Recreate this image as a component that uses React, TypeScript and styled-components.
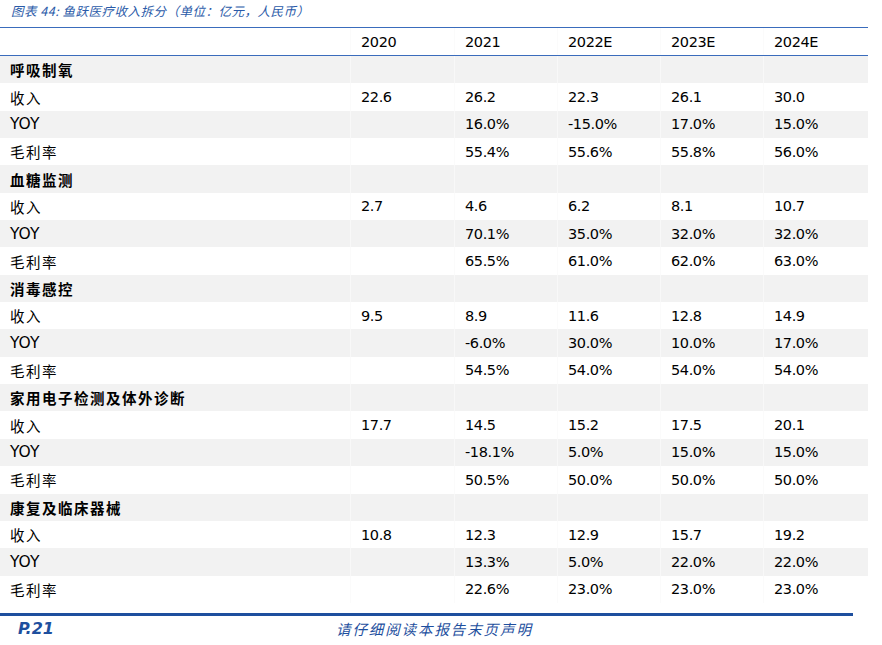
import React from 'react';
import styled, { createGlobalStyle } from 'styled-components';

const GlobalStyle = createGlobalStyle`
  html, body {
    margin: 0;
    padding: 0;
    background: #ffffff;
  }
  body {
    font-family: "DejaVu Sans", "Noto Sans CJK SC", sans-serif;
    color: #000;
  }
`;

const Page = styled.div`
  width: 882px;
  height: 645px;
  overflow: hidden;
  display: flex;
  flex-direction: column;
`;

const Caption = styled.div`
  height: 27px;
  padding: 2px 0 0 11px;
  box-sizing: border-box;
  font-family: "Noto Sans CJK SC", sans-serif;
  font-style: italic;
  font-size: 12.5px;
  letter-spacing: 0.5px;
  color: #2a5aa8;
  line-height: 18px;
`;

const Table = styled.div`
  width: 868px;
  border-top: 1.5px solid #3a6cbc;
`;

const Row = styled.div<{ $shade?: boolean; $head?: boolean }>`
  display: grid;
  grid-template-columns: 350px 104px 103px 103px 103px 105px;
  height: ${({ $head }) => ($head ? '27px' : '27.35px')};
  background: ${({ $shade }) => ($shade ? '#f2f2f2' : '#ffffff')};
  border-bottom: ${({ $head }) => ($head ? '1.5px solid #3a6cbc' : 'none')};
  align-items: center;
`;

const Label = styled.div<{ $bold?: boolean }>`
  padding-left: 10px;
  font-family: "Noto Sans CJK SC", sans-serif;
  font-size: 14.5px;
  font-weight: ${({ $bold }) => ($bold ? 700 : 400)};
  letter-spacing: 1.5px;
  height: 100%;
  display: flex;
  align-items: center;
`;

const Latin = styled.span`
  font-family: "DejaVu Sans", sans-serif;
  font-size: 15.5px;
  letter-spacing: 0;
`;

const Cell = styled.div<{ $shade?: boolean }>`
  height: 100%;
  display: flex;
  align-items: center;
  padding-left: 10px;
  font-size: 14.5px;
  letter-spacing: -0.4px;
  border-left: 1px solid ${({ $shade }) => ($shade ? '#f8f8f8' : '#fbfbfb')};
`;

const Footer = styled.div`
  margin-top: 10px;
  width: 853px;
  border-top: 3px solid #1e4f9e;
  display: flex;
  align-items: center;
  height: 26px;
`;

const PageNo = styled.div`
  padding-left: 18px;
  font-family: "DejaVu Sans", sans-serif;
  font-weight: 700;
  font-style: italic;
  font-size: 16px;
  color: #1e4f9e;
  width: 318px;
`;

const Notice = styled.div`
  font-family: "Noto Sans CJK SC", sans-serif;
  font-style: italic;
  font-size: 14.5px;
  letter-spacing: 1.9px;
  color: #1e4f9e;
`;

type Group = {
  name: string;
  revenue: string[];
  yoy: string[];
  margin: string[];
};

const years = ['2020', '2021', '2022E', '2023E', '2024E'];

const groups: Group[] = [
  {
    name: '呼吸制氧',
    revenue: ['22.6', '26.2', '22.3', '26.1', '30.0'],
    yoy: ['', '16.0%', '-15.0%', '17.0%', '15.0%'],
    margin: ['', '55.4%', '55.6%', '55.8%', '56.0%'],
  },
  {
    name: '血糖监测',
    revenue: ['2.7', '4.6', '6.2', '8.1', '10.7'],
    yoy: ['', '70.1%', '35.0%', '32.0%', '32.0%'],
    margin: ['', '65.5%', '61.0%', '62.0%', '63.0%'],
  },
  {
    name: '消毒感控',
    revenue: ['9.5', '8.9', '11.6', '12.8', '14.9'],
    yoy: ['', '-6.0%', '30.0%', '10.0%', '17.0%'],
    margin: ['', '54.5%', '54.0%', '54.0%', '54.0%'],
  },
  {
    name: '家用电子检测及体外诊断',
    revenue: ['17.7', '14.5', '15.2', '17.5', '20.1'],
    yoy: ['', '-18.1%', '5.0%', '15.0%', '15.0%'],
    margin: ['', '50.5%', '50.0%', '50.0%', '50.0%'],
  },
  {
    name: '康复及临床器械',
    revenue: ['10.8', '12.3', '12.9', '15.7', '19.2'],
    yoy: ['', '13.3%', '5.0%', '22.0%', '22.0%'],
    margin: ['', '22.6%', '23.0%', '23.0%', '23.0%'],
  },
];

const DataRow: React.FC<{ label: React.ReactNode; values: string[]; shade: boolean; bold?: boolean }> = ({
  label,
  values,
  shade,
  bold,
}) => (
  <Row $shade={shade}>
    <Label $bold={bold}>{label}</Label>
    {values.map((v, i) => (
      <Cell key={i} $shade={shade}>
        {v}
      </Cell>
    ))}
  </Row>
);

const empty = ['', '', '', '', ''];

export default function App() {
  return (
    <Page>
      <GlobalStyle />
      <Caption>图表 44: 鱼跃医疗收入拆分（单位：亿元，人民币）</Caption>
      <Table>
        <Row $head>
          <Label />
          {years.map((y) => (
            <Cell key={y}>{y}</Cell>
          ))}
        </Row>
        {groups.map((g) => (
          <React.Fragment key={g.name}>
            <DataRow label={g.name} values={empty} shade bold />
            <DataRow label="收入" values={g.revenue} shade={false} />
            <DataRow label={<Latin>YOY</Latin>} values={g.yoy} shade />
            <DataRow label="毛利率" values={g.margin} shade={false} />
          </React.Fragment>
        ))}
      </Table>
      <Footer>
        <PageNo>P.21</PageNo>
        <Notice>请仔细阅读本报告末页声明</Notice>
      </Footer>
    </Page>
  );
}
